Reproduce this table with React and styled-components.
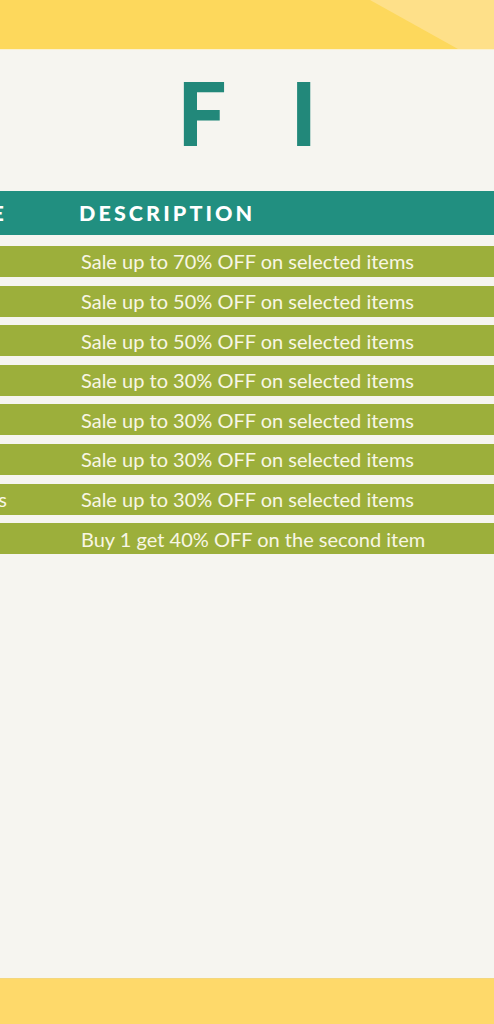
import React from 'react';
import styled, { createGlobalStyle } from 'styled-components';

const GlobalStyle = createGlobalStyle`
  html, body {
    margin: 0;
    padding: 0;
    background: #f6f5f0;
  }
  body {
    font-family: Lato, "Open Sans", sans-serif;
  }
`;

const deals = [
  { name: '', text: 'Sale up to 70% OFF on selected items' },
  { name: '', text: 'Sale up to 50% OFF on selected items' },
  { name: '', text: 'Sale up to 50% OFF on selected items' },
  { name: '', text: 'Sale up to 30% OFF on selected items' },
  { name: '', text: 'Sale up to 30% OFF on selected items' },
  { name: '', text: 'Sale up to 30% OFF on selected items' },
  { name: 'Bags', text: 'Sale up to 30% OFF on selected items' },
  { name: '', text: 'Buy 1 get 40% OFF on the second item' },
];

const App = () => {
  return (
    <>
      <GlobalStyle />
      <Page>
        <TopBand />
        <Title>
          <span>F</span>
          <span>I</span>
        </Title>
        <Table>
          <HeadRow>
            <NameCell>NAME</NameCell>
            <HeadCell>DESCRIPTION</HeadCell>
          </HeadRow>
          {deals.map((d, i) => (
            <Row key={i}>
              <NameCell>{d.name}</NameCell>
              <Cell>{d.text}</Cell>
            </Row>
          ))}
        </Table>
        <Spacer />
        <BottomBand />
      </Page>
    </>
  );
};

const Page = styled.div`
  min-height: 100vh;
  display: flex;
  flex-direction: column;
  overflow: hidden;
`;

const TopBand = styled.div`
  position: relative;
  height: 49px;
  background: #fdd85c;
  border-bottom: 1px solid #fbf1cf;

  &::after {
    content: '';
    position: absolute;
    inset: 0;
    background: #fee089;
    clip-path: polygon(370px 0, 100% 0, 100% 100%, 458px 100%);
  }
`;

const Title = styled.h1`
  margin: 19px 0 35px;
  display: flex;
  justify-content: center;
  gap: 64px;
  font-family: Lato, sans-serif;
  font-weight: 900;
  font-size: 87px;
  line-height: 1;
  color: #22887a;
`;

const Table = styled.div`
  display: flex;
  flex-direction: column;
  gap: 8.6px;
`;

const HeadRow = styled.div`
  display: flex;
  align-items: center;
  height: 44px;
  margin-bottom: 2.4px;
  background: #218f80;
  color: #fff;
  font-weight: 900;
  font-size: 21.5px;
  letter-spacing: 3.1px;
`;

const Row = styled.div`
  display: flex;
  align-items: center;
  height: 31px;
  background: #9caf3b;
  color: #f8f6e4;
  font-size: 20px;
`;

const NameCell = styled.div`
  flex: 0 0 79px;
  display: flex;
  justify-content: flex-end;
  padding-right: 72px;
  box-sizing: border-box;
  white-space: nowrap;
  overflow: hidden;
`;

const HeadCell = styled.div`
  white-space: nowrap;
`;

const Cell = styled.div`
  padding-left: 2px;
  white-space: nowrap;
`;

const Spacer = styled.div`
  flex: 1;
`;

const BottomBand = styled.div`
  height: 45px;
  background: #fed96a;
  border-top: 1px solid #f3d77e;
`;

export default App;
